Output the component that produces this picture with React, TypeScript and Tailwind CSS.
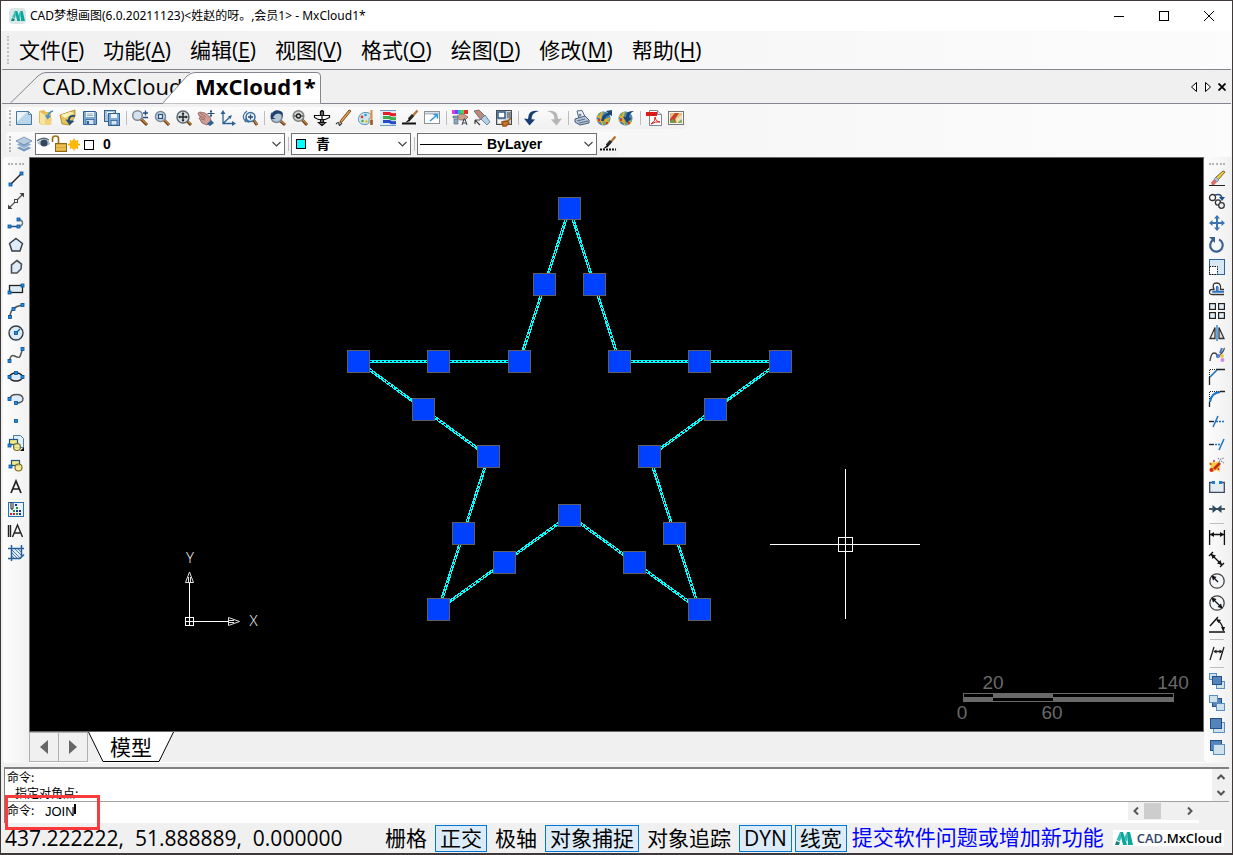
import React from "react";

type Pt = [number, number];

const uiFont = "font-['Open_Sans','Noto_Sans_CJK_SC',sans-serif]";

/* ---------- small drawing helpers ---------- */

const Node = ({ x, y }: { x: number; y: number }) => (
  <rect x={x - 1.5} y={y - 1.5} width="3" height="3" fill="#1e90e8" stroke="#0a4f94" strokeWidth="0.8" />
);

const Icon = ({ children }: { children: React.ReactNode }) => (
  <svg viewBox="0 0 16 16" className="h-4 w-4 shrink-0 overflow-visible" fill="none" aria-hidden="true">
    {children}
  </svg>
);

const Lens = ({ cx = 6.5, cy = 6.5, r = 5, fill = "#d3e2ee", stroke = "#7d8792" }) => (
  <>
    <path d={`M${cx + r * 0.7} ${cy + r * 0.7}L15 15`} stroke="#6b3f1c" strokeWidth="3" />
    <path d={`M${cx + r * 0.8} ${cy + r * 0.7}L15 14.4`} stroke="#d08a3e" strokeWidth="1.2" />
    <circle cx={cx} cy={cy} r={r} fill={fill} stroke={stroke} strokeWidth="1.5" />
  </>
);

const Globe = () => (
  <>
    <circle cx="7.5" cy="8.5" r="7" fill="#4e86b4" />
    <path d="M2 5q3-4 6-3l-2 4-4 2zM8 9l4-1 2 3-4 4-3-2z" fill="#7fae6a" />
    <path d="M1 10q6 3 13-2M6 2q-3 6 1 13M1 6q6 2 12 7" stroke="#f2b21c" strokeWidth="1.4" />
    <circle cx="3" cy="10" r="1.2" fill="#d9381e" />
    <circle cx="11" cy="13" r="1.2" fill="#d9381e" />
  </>
);

const Brush = () => (
  <>
    <path d="M15.5.5L8 9" stroke="#b5763a" strokeWidth="2.4" />
    <path d="M11 5L7 9.5" stroke="#2b2b2b" strokeWidth="3.2" />
    <path d="M8.5 7.5L3 13l5-2z" fill="#111" />
  </>
);

const Sq = ({ x, y, s = 9, dark = false }: { x: number; y: number; s?: number; dark?: boolean }) => (
  <rect
    x={x + 0.5}
    y={y + 0.5}
    width={s}
    height={s - 1}
    fill={dark ? "#5484ba" : "#cfe2ec"}
    stroke={dark ? "#1f4f8c" : "#5a8fc0"}
  />
);

/* ---------- icon set ---------- */

const icons: Record<string, React.ReactNode> = {
  new: (
    <>
      <path d="M.5 1.5h12l3 3v10H.5z" fill="#b9d6ea" stroke="#47799f" />
      <path d="M1 2h10L1 12z" fill="#fff" opacity="0.7" />
      <path d="M12.5 1.5v3h3z" fill="#f4f8fb" stroke="#47799f" strokeWidth="0.8" />
    </>
  ),
  open: (
    <>
      <path d="M1 1l5-1 2 2h5v13H4l-3-2z" fill="#e3bd5c" />
      <path d="M2 2l5 3v11l-5-3z" fill="#f8e4a3" />
      <path d="M7 6l7 2-1 7H7z" fill="#f2d27c" />
      <path d="M15 1q-4 1-5 5" stroke="#3d93cf" strokeWidth="1.8" />
      <path d="M7 5l2.500 4.500L13 6z" fill="#3d93cf" />
    </>
  ),
  recover: (
    <>
      <path d="M0 5l6-2 9-3v6L10 15l-8-1z" fill="#e4c35d" stroke="#a98224" strokeWidth="0.8" />
      <path d="M1 5l9-3 4 1-9 5z" fill="#fff2b7" />
      <path d="M15 6q-7-1-6 6" stroke="#254b78" strokeWidth="2" />
      <path d="M5.500 9.500l4 5.500 5-4z" fill="#254b78" />
    </>
  ),
  save: (
    <>
      <path d="M1.5 1.5h12l1 1v12h-13z" fill="#7fa9cf" stroke="#2f6195" />
      <rect x="4" y="2" width="8" height="5" fill="#edf4fa" />
      <path d="M5 4h6M5 5.500h6" stroke="#7393ae" strokeWidth="0.7" />
      <rect x="4" y="9.500" width="8" height="5" fill="#d6e5f2" stroke="#2f6195" strokeWidth="0.8" />
      <rect x="5" y="11" width="2" height="3" fill="#2f6195" />
    </>
  ),
  saveAll: (
    <>
      <rect x="0.5" y="0.5" width="11" height="11" fill="#a9c5de" stroke="#2f6195" />
      <path d="M3 3h6" stroke="#fff" strokeWidth="2" />
      <rect x="4.5" y="3.5" width="11" height="12" fill="#7fa9cf" stroke="#2f6195" />
      <rect x="7" y="4" width="6" height="4" fill="#edf4fa" />
      <rect x="7" y="10.500" width="6" height="4.500" fill="#d6e5f2" stroke="#2f6195" strokeWidth="0.8" />
    </>
  ),
  zoomRealtime: (
    <>
      <Lens cx={5.5} cy={5.5} r={4.8} />
      <path d="M11 3h5M13.500.5v5M11 7.500h5" stroke="#234c7d" strokeWidth="1.3" />
    </>
  ),
  zoomWindow: (
    <>
      <Lens cx={6.5} cy={6.5} r={5} />
      <rect x="4.500" y="4.500" width="4" height="4" fill="#fff" stroke="#1f4f8c" strokeWidth="1.300" />
    </>
  ),
  zoomExtents: (
    <>
      <Lens cx={7} cy={7} r={6} fill="#dde7ee" stroke="#5e6770" />
      <path d="M7 3v8M3 7h8" stroke="#222" strokeWidth="1.400" />
      <path d="M7 2L5.300 4.300h3.400zM7 12l-1.700-2.300h3.400zM2 7l2.300-1.700v3.400zM12 7L9.700 5.300v3.400z" fill="#222" />
    </>
  ),
  pan: (
    <>
      <path d="M0 3l2-1 5 1 5 4 1 4-4 4-5-2-3-5 2-.5-2-2z" fill="#cf9c97" stroke="#8c5a58" strokeWidth="0.8" />
      <path d="M2 3l6 4M1 5.500l6 3M3 9l4 1" stroke="#8c5a58" strokeWidth="0.7" />
      <path d="M9 14l4-4 3 3-4 3z" fill="#31618f" />
      <path d="M13 0v7M9.500 3.500h7M12 1.500h2M12 5.500h2" stroke="#234c7d" strokeWidth="1.100" />
    </>
  ),
  ucs: (
    <>
      <path d="M3 2v11.500h11M3 13.500L10 7" stroke="#2f6195" strokeWidth="1.300" />
      <path d="M3 0L.5 4h5zM16 13.500l-4-2.500v5zM12 5L8 6.500l2.500 2.500z" fill="#2f6195" />
    </>
  ),
  zoomScale: (
    <>
      <Lens cx={8.500} cy={7} r={4.500} fill="#e8eff5" stroke="#3b6c9c" />
      <path d="M8.500 4.500v5M6 7h5" stroke="#234c7d" strokeWidth="1.300" />
      <path d="M5 1Q-2 6 4 12M3 11l3 1-2-3z" stroke="#3b6c9c" strokeWidth="1.200" />
    </>
  ),
  zoomPrevious: (
    <>
      <Lens cx={6.500} cy={7} r={5.500} fill="#b8c8d6" />
      <path d="M3 7.500q3-6 9-3v4q3-7-3-8Q4-1 2 4L1 2v7h5z" fill="#1e4270" />
    </>
  ),
  magnify: (
    <>
      <Lens cx={6.500} cy={6} r={5.300} fill="#d2d6d7" stroke="#7e7e7e" />
      <circle cx="6.500" cy="6" r="2" stroke="#222" strokeWidth="1.300" />
      <path d="M2 6h3M8 6h3" stroke="#222" />
    </>
  ),
  plane: (
    <>
      <path d="M6.500 15V1.500Q8 0 9.500 1.500V15" fill="#fff" stroke="#111" strokeWidth="1.200" />
      <path d="M.5 5.500h15v2l-4 2h-7l-4-2z" fill="#fff" stroke="#111" strokeWidth="1.200" />
      <path d="M4.500 12.500h7L8 15.500z" fill="#fff" stroke="#111" strokeWidth="1.200" />
      <path d="M8 0v16" stroke="#111" strokeWidth="1.200" />
    </>
  ),
  pencil: (
    <>
      <path d="M15 1L6 12l-2 1 .5-2.500L13 0z" fill="#e4a34a" stroke="#6c3b14" strokeWidth="0.900" />
      <path d="M0 14q3-3 3 0t3-1" stroke="#222" strokeWidth="1.200" />
    </>
  ),
  palette: (
    <>
      <path d="M7 2.500c5 0 7 2 6 4s-2 1-2 3 1 5-4 5-7-3-6.500-6S3 2.500 7 2.500z" fill="#cfe6f0" stroke="#4d91b8" />
      <circle cx="4" cy="7" r="1.400" fill="#d63c2b" />
      <circle cx="7.500" cy="5" r="1.300" fill="#2a9fd6" />
      <circle cx="4.500" cy="11" r="1.300" fill="#5cab3f" />
      <circle cx="8.500" cy="11.500" r="1.300" fill="#e7bb2d" />
      <path d="M13.500 0v14" stroke="#e58c35" strokeWidth="2" />
      <path d="M13.500 10v5" stroke="#9a5a20" strokeWidth="2.500" />
    </>
  ),
  layerStates: (
    <>
      <path d="M0 .5h16v15H0z" fill="#dcebf5" />
      <path d="M0 .5h16M0 15.500h16" stroke="#6f9cc0" />
      <path d="M3 2h7q2 2 6 1v3q-5 1-7-1H3z" fill="#e3202a" />
      <path d="M3 6h7q2 2 6 1v3q-5 1-7-1H3z" fill="#3eae49" />
      <path d="M3 10h7q2 2 6 1v3q-5 1-7-1H3z" fill="#2749c9" />
    </>
  ),
  brush: (
    <>
      <Brush />
      <path d="M0 13.500h14" stroke="#111" strokeWidth="2" />
    </>
  ),
  brushDots: (
    <>
      <Brush />
      <path d="M0 13.500h16" stroke="#111" strokeWidth="2" strokeDasharray="2 1" />
    </>
  ),
  external: (
    <>
      <rect x="0.500" y="1.500" width="15" height="12" fill="#fff" stroke="#8b9299" />
      <path d="M1 3.500h14" stroke="#b7c1ca" strokeWidth="2" />
      <path d="M6 11l7-6M13.500 4.500H9.500M13.500 4.500v4" stroke="#2896d8" strokeWidth="1.500" />
    </>
  ),
  matchColor: (
    <>
      <path d="M0 0h3v4H0z" fill="#e33ad4" />
      <path d="M3 0h3v4H3z" fill="#6744ee" />
      <path d="M6 0h3v4H6z" fill="#17bddb" />
      <path d="M9 0h3v4H9z" fill="#5fd138" />
      <path d="M12 0h4v4h-4z" fill="#ed2929" />
      <path d="M4 7q5-5 9-2l3 2-3 3-5 0z" fill="#c89f8b" stroke="#7c5848" strokeWidth="0.700" />
      <path d="M1 6h5v2H1zM2 9h4v5H2z" fill="#8ba9bf" stroke="#4e6475" strokeWidth="0.600" />
      <path d="M10 15l2-6h1l2 6M10.500 13h4" stroke="#34465a" />
    </>
  ),
  eraseHand: (
    <>
      <path d="M0 1l5-1 6 6-4 4z" fill="#b68c80" stroke="#75554b" strokeWidth="0.800" />
      <path d="M7 9l4-4 5 7-3 3z" fill="#b7d0e3" stroke="#46729b" strokeWidth="0.800" />
      <path d="M1 10h5M1 10v4M1 10l5 5" stroke="#444" strokeWidth="1.200" />
    </>
  ),
  props: (
    <>
      <rect x="0.500" y="0.500" width="15" height="14" fill="#c8ced4" stroke="#454c54" />
      <rect x="2" y="2" width="7" height="6" fill="#fff" stroke="#24518a" strokeWidth="1.400" />
      <path d="M11 3h4M11 5h4M11 7h4" stroke="#444" />
      <path d="M2 10h5v3H2z" fill="#f5f5f5" />
      <path d="M15 8l-4 4M6 12l5-1 2 2-3 3H7z" stroke="#995516" strokeWidth="1.500" fill="#cb792a" />
    </>
  ),
  undo: <path d="M15 1Q4-1 4 9L0 8.500 5.500 15.500 11 9.500l-3.500-.2Q7 3 15 1z" fill="#173d70" />,
  redo: <path d="M1 1q11-2 11 8l4-.5-5.500 7L5 9.500l3.500-.2Q9 3 1 1z" fill="#b5b5b5" />,
  print: (
    <>
      <path d="M3 1l5-.5 3 6-6 2z" fill="#eef3f8" stroke="#51647e" />
      <path d="M1 9l10-3 4 4v3l-9 2-5-3z" fill="#b9c8d8" stroke="#455a78" />
      <path d="M3 11l8-2M5 13l9-2" stroke="#455a78" strokeWidth="0.900" />
      <circle cx="6" cy="5" r="1.500" fill="#6a86a5" />
    </>
  ),
  publish: (
    <>
      <Globe />
      <path d="M5 11Q6 4 12 3l-2-2 6-1v6l-2-1q-5 1-6 6z" fill="#1d4778" />
    </>
  ),
  download: (
    <>
      <Globe />
      <path d="M16 1Q8 0 8 7L5 7l4 6 5-5-3-.5q0-4 5-6.500z" fill="#1d4778" />
    </>
  ),
  pdf: (
    <>
      <path d="M3.500.5h8l4 4v11h-12z" fill="#fff" stroke="#7c8791" />
      <path d="M11.500.5v4h4" fill="#e4e9ed" stroke="#7c8791" />
      <path d="M0 2h11v4H0z" fill="#dd1c1a" />
      <path d="M5 14q5-3 4-7 1 5 5 5-4-1-9 2z" stroke="#dd1c1a" />
    </>
  ),
  image: (
    <>
      <rect x="0.500" y="1.500" width="15" height="13" fill="#f7f7f7" stroke="#777" />
      <rect x="2" y="3" width="12" height="10" fill="#e4bd7a" />
      <path d="M2 9l5-6h4l-4 6 1 4H2z" fill="#c8402c" />
      <path d="M2 11l3-2 3 4H2z" fill="#6f9f40" />
      <path d="M8 9l6-4v8H9z" fill="#eee0c2" />
      <path d="M10 12l4-3v4h-4z" fill="#8fae5a" />
    </>
  ),
  layers: (
    <>
      <path d="M0 12l8-4 8 4-8 4z" fill="#7c9bbd" stroke="#fff" strokeWidth="0.600" />
      <path d="M0 8.500l8-4 8 4-8 4z" fill="#91add0" stroke="#fff" strokeWidth="0.600" />
      <path d="M0 5l8-4 8 4-8 4z" fill="#b7cde0" stroke="#456d98" strokeWidth="0.600" />
    </>
  ),
  line: (
    <>
      <path d="M2.500 13.500L13.500 2.500" stroke="#222" strokeWidth="1.400" />
      <Node x={2.5} y={13.5} />
      <Node x={13.5} y={2.5} />
    </>
  ),
  xline: (
    <>
      <path d="M1 15L15 1" stroke="#555" strokeWidth="1.200" />
      <path d="M0 16v-4.500l4.500 4.500zM16 0v4.500L11.500 0z" fill="#444" />
      <rect x="6.500" y="6.500" width="3" height="3" fill="#fff" stroke="#444" />
    </>
  ),
  pline: (
    <>
      <path d="M10.500 11.500q4-.5 4-3.500t-4-3.500" stroke="#777" strokeWidth="1.500" />
      <path d="M1.500 11.500h9" stroke="#174e8a" strokeWidth="1.500" />
      <Node x={1.5} y={11.5} />
      <Node x={10.5} y={11.5} />
      <Node x={10.5} y={4.5} />
    </>
  ),
  polygon: <path d="M8 1.500l6.500 5-2.500 7.500H4L1.500 6.500z" fill="#dcebf7" stroke="#333d47" strokeWidth="1.400" />,
  polygonFree: <path d="M9 1.500l4.500 3.500-.5 5-4 4H3.500V6z" fill="#dcebf7" stroke="#4c5055" strokeWidth="1.600" />,
  rect: (
    <>
      <rect x="1.500" y="4.500" width="13" height="7" fill="#dcebf7" stroke="#222" strokeWidth="1.300" />
      <Node x={1.5} y={11.5} />
      <Node x={14.5} y={4.5} />
    </>
  ),
  arc: (
    <>
      <path d="M2 14Q2 4 14.500 2" stroke="#555" strokeWidth="1.500" />
      <Node x={2} y={14} />
      <Node x={5.5} y={6} />
      <Node x={14.5} y={2} />
    </>
  ),
  circle: (
    <>
      <circle cx="8" cy="8" r="7" fill="#dcebf7" stroke="#333d47" strokeWidth="1.400" />
      <path d="M8 8l4-4" stroke="#0a60a8" strokeWidth="1.300" />
      <Node x={8} y={8} />
    </>
  ),
  spline: (
    <>
      <path d="M1.500 14q1-7 5-5t5 1 3-8" stroke="#555" strokeWidth="1.500" />
      <Node x={1.5} y={14} />
      <Node x={14.5} y={2} />
    </>
  ),
  ellipse: (
    <>
      <ellipse cx="8" cy="8" rx="6.500" ry="4" fill="#dcebf7" stroke="#222" strokeWidth="1.300" />
      <Node x={1.5} y={8} />
      <Node x={14.5} y={8} />
      <Node x={8} y={4} />
    </>
  ),
  ellipseArc: (
    <>
      <path d="M2 8q0-4.500 6.500-4.500T15 8q0 4-7 4" fill="#dcebf7" stroke="#555" strokeWidth="1.400" />
      <Node x={1.5} y={8} />
      <Node x={8} y={12} />
    </>
  ),
  point: <Node x={8} y={8} />,
  block: (
    <>
      <path d="M5.500.5h7l3 3v9h-10z" fill="#e4f0f8" stroke="#477ba8" />
      <rect x="1.500" y="4.500" width="8" height="5" fill="#f2ea82" stroke="#24558a" strokeWidth="1.200" />
      <circle cx="9" cy="12" r="3.500" fill="#f2ea82" fillOpacity="0.800" stroke="#776f2b" strokeWidth="1.200" />
      <Node x={1.5} y={10.5} />
      <path d="M16 12v4h-4z" fill="#111" />
    </>
  ),
  insert: (
    <>
      <rect x="3.500" y="3.500" width="8" height="5" fill="#f2ea82" stroke="#24558a" strokeWidth="1.200" />
      <circle cx="10.500" cy="10.500" r="3.500" fill="#f2ea82" fillOpacity="0.800" stroke="#776f2b" strokeWidth="1.200" />
      <Node x={2.5} y={9.5} />
    </>
  ),
  text: <path d="M3 14L8 2l5 12M5 10h6" stroke="#222" strokeWidth="1.700" />,
  table: (
    <>
      <rect x="0.500" y="1.500" width="15" height="14" fill="#e7f2fa" stroke="#2a6eb4" />
      <path d="M3 1v7q2 1 2-1V2" stroke="#222" />
      <path d="M2 12h2v2H2zM5 12h2v2H5z" fill="#d22020" />
      <path d="M5 9h2v2H5zM8 12h2v2H8zM8 6h2v2H8z" fill="#2b8a36" />
      <path d="M7 3h2v2H7zM8 9h2v2H8zM11 12h2v2h-2zM11 9h2v2h-2z" fill="#222d9c" />
    </>
  ),
  mtext: <path d="M.5 2v12M2.500 2v12M4.500 14L9.500 2l5 12M6.500 10h6" stroke="#222" strokeWidth="1.400" />,
  hatch: (
    <>
      <path d="M4 4h9v9H4z" fill="#dcebf7" />
      <path d="M4 11l2 2M4 8l5 5M4 5l8 8M7 4l6 6M10 4l3 3" stroke="#355f8c" strokeWidth="0.800" />
      <path d="M0 3.500h16M0 13.500h12l4-4M3.500 0v16M13.500 0v12" stroke="#24609a" strokeWidth="1.500" />
    </>
  ),
  erase: (
    <>
      <path d="M16 1l-7 8-3-2 8-7z" fill="#efcf4a" stroke="#695515" strokeWidth="0.900" />
      <path d="M7 6l3 3-2 2-3-3z" fill="#a9c8de" stroke="#55768f" strokeWidth="0.600" />
      <path d="M5 8l3 3-3 3H3l-1-2z" fill="#dc6a68" />
      <path d="M0 14.500h16" stroke="#222" />
    </>
  ),
  copy: (
    <>
      <circle cx="3.500" cy="4.500" r="3" fill="#fff" stroke="#333" strokeWidth="1.300" />
      <circle cx="9" cy="9.500" r="2.600" fill="#fff" stroke="#333" strokeWidth="1.300" />
      <circle cx="12.500" cy="12.500" r="2.800" fill="#eef5fa" stroke="#333" strokeWidth="1.300" />
      <path d="M6 2q6-2 7 3" stroke="#235083" strokeWidth="1.600" />
      <path d="M10 4h6l-3 4z" fill="#235083" />
    </>
  ),
  move: <path d="M8 0l3 3.500H9V7h3.500V5L16 8l-3.500 3V9H9v3.500h2L8 16l-3-3.500h2V9H3.500v2L0 8l3.500-3v2H7V3.500H5z" fill="#3c74b0" />,
  rotate: (
    <>
      <path d="M10 2.500A6.300 6.300 0 1 1 4 3" stroke="#3a6191" strokeWidth="2.200" />
      <path d="M0 0h6v6z" fill="#3a6191" />
    </>
  ),
  scale: (
    <>
      <rect x="0.500" y="0.500" width="15" height="15" fill="#d6e8f5" stroke="#2d6599" />
      <path d="M.5 7.500h8v8h-8z" fill="#fff" />
      <path d="M.5 7.500h8v8h-8z" stroke="#111" strokeDasharray="1.500 1" />
    </>
  ),
  offset: (
    <>
      <path d="M15 13.500H3q-2.500 0-2.500-2.500T3 8.500h2Q2.500 2 7.500 2t4 6.500H15" fill="#fff" stroke="#333" strokeWidth="1.300" />
      <path d="M15 11H4q-1 0 0-.500h3.500v-4q.5-2 1.500 0v4h6" stroke="#2d72c0" strokeWidth="1.300" />
    </>
  ),
  array: (
    <g fill="#e3eff8" stroke="#222" strokeWidth="1.200">
      <rect x="0.600" y="0.600" width="5.800" height="5.800" />
      <rect x="9.600" y="0.600" width="5.800" height="5.800" />
      <rect x="0.600" y="9.600" width="5.800" height="5.800" />
      <rect x="9.600" y="9.600" width="5.800" height="5.800" />
    </g>
  ),
  mirror: (
    <>
      <path d="M6 2.500v11H1z" fill="#e7eff5" stroke="#333" strokeWidth="1.300" />
      <path d="M10 2.500v11h5z" fill="#dde2e6" stroke="#333" strokeWidth="1.300" />
      <path d="M8 0v16" stroke="#1b78ca" strokeWidth="1.300" />
    </>
  ),
  splineEdit: (
    <>
      <path d="M1 14q1-8 4-8t3 3 4-2 3-6" stroke="#444" strokeWidth="1.400" />
      <path d="M13 1l-2 5" stroke="#3f75c4" strokeWidth="2" />
      <circle cx="9" cy="9" r="2" fill="#4f83d8" />
      <circle cx="13" cy="9" r="2" fill="#efc84a" />
      <circle cx="13.500" cy="13" r="2" fill="#d38be8" />
    </>
  ),
  chamfer: (
    <>
      <path d="M.5 16V8M7 .5h9" stroke="#222" strokeWidth="1.300" />
      <path d="M.5 8V.5H7" stroke="#222" strokeDasharray="1 1" />
      <path d="M1 8l7-7" stroke="#1b70c4" strokeWidth="1.600" />
    </>
  ),
  fillet: (
    <>
      <path d="M.5 16v-5M11 .5h5" stroke="#222" strokeWidth="1.300" />
      <path d="M.5 8V.5H10" stroke="#222" strokeDasharray="1 1" />
      <path d="M1 11Q2 2 11 1" stroke="#1b70c4" strokeWidth="2" />
    </>
  ),
  trim: (
    <>
      <path d="M0 8.500h5" stroke="#222" strokeWidth="1.400" />
      <path d="M7 8.500h9" stroke="#1b70c4" strokeWidth="1.400" strokeDasharray="2 1" />
      <path d="M4 14L9 3" stroke="#1b70c4" strokeWidth="1.500" />
    </>
  ),
  extend: (
    <>
      <path d="M0 9.500h5" stroke="#222" strokeWidth="1.400" />
      <path d="M6 9.500h5" stroke="#1b70c4" strokeWidth="1.400" strokeDasharray="2 1" />
      <path d="M10 15l5-11" stroke="#1b70c4" strokeWidth="1.500" />
    </>
  ),
  explode: (
    <>
      <path d="M0 5l3 1 2-2 1 2 4-2-1 4 3 1-2 2 1 4-4-2-3 2-1-3-3 1 2-4z" fill="#f9c93c" />
      <path d="M4 11l6-6 2 2-6 6z" fill="#c52a1b" />
      <circle cx="2.500" cy="13" r="2" fill="#dd2717" />
      <circle cx="1.500" cy="7" r="1" fill="#d22" />
      <circle cx="9.500" cy="12" r="1" fill="#d22" />
      <circle cx="5" cy="4" r="1" fill="#d22" />
      <path d="M10 5l2-3 3-1M12 4l3 2M9 1l2 2" stroke="#829baa" strokeWidth="1.300" strokeDasharray="1.500 1" />
    </>
  ),
  break: (
    <>
      <path d="M4 3.500H.7v9.800h14.600V3.500H12" fill="#e4edf4" stroke="#3d4a61" strokeWidth="1.300" />
      <path d="M3 2h3v3H3zM10 2h3v3h-3z" fill="#1681dc" />
    </>
  ),
  join: (
    <>
      <path d="M0 8h16" stroke="#222" strokeWidth="1.500" />
      <path d="M3.500 4l5 4-5 4zM12.500 4l-5 4 5 4z" fill="#2a4b66" />
    </>
  ),
  dimLinear: (
    <>
      <path d="M.6 1v15M15.400 1v15M1 5.500h14" stroke="#111" strokeWidth="1.300" />
      <path d="M1 5.500l4-2.500v5zM15 5.500L11 3v5z" fill="#111" />
    </>
  ),
  dimAligned: (
    <>
      <path d="M0 5l4-4M11 16l4-4M2.500 3.500l10 10" stroke="#111" strokeWidth="1.400" />
      <path d="M2 3l5 1.500L3.500 8zM13 14l-1.500-5L8 12.500z" fill="#111" />
    </>
  ),
  dimRadius: (
    <>
      <circle cx="8" cy="8" r="7.200" fill="#f3f6f8" stroke="#444" strokeWidth="1.300" />
      <path d="M3 3l6 6" stroke="#111" strokeWidth="1.300" />
      <path d="M2.500 2.500l5 1.500L4 7.500z" fill="#111" />
    </>
  ),
  dimDiameter: (
    <>
      <circle cx="8" cy="8" r="7.200" fill="#f3f6f8" stroke="#444" strokeWidth="1.300" />
      <path d="M3 3l10 10" stroke="#111" strokeWidth="1.300" />
      <path d="M2.500 2.500l5 1.500L4 7.500zM13.500 13.500l-5-1.500L12 8.500z" fill="#111" />
    </>
  ),
  dimAngle: (
    <>
      <path d="M0 15h16M1 9l8-9M8 3q6 4 6.500 11" stroke="#111" strokeWidth="1.400" />
      <path d="M7 2l5 1-2.500 3zM14.500 14.500L12 10h4z" fill="#111" />
    </>
  ),
  dimEdit: (
    <>
      <path d="M1 15L5 2M11 15l4-13M5 6.500h8" stroke="#222" strokeWidth="1.300" />
      <path d="M4.500 6.500l3-2v4zM13.500 6.500l-3-2v4z" fill="#222" />
    </>
  ),
  order1: (
    <>
      <Sq x={0} y={0} s={7} />
      <Sq x={7} y={8} s={8} />
      <Sq x={3} y={3} s={9} dark />
    </>
  ),
  order2: (
    <>
      <Sq x={3} y={3} s={9} dark />
      <Sq x={0} y={0} s={8} />
      <Sq x={7} y={8} s={8} />
    </>
  ),
  order3: (
    <>
      <Sq x={4} y={5} s={11} />
      <Sq x={1} y={1} s={11} dark />
    </>
  ),
  order4: (
    <>
      <Sq x={1} y={1} s={11} dark />
      <Sq x={4} y={5} s={11} />
    </>
  ),
};

/* ---------- toolbars ---------- */

const mainTools = [
  "new", "open", "recover", "save", "saveAll", "|",
  "zoomRealtime", "zoomWindow", "zoomExtents", "pan", "ucs", "zoomScale", "|",
  "zoomPrevious", "magnify", "plane", "pencil", "palette", "layerStates", "brush", "external", "|",
  "matchColor", "eraseHand", "props", "|", "undo", "redo", "|", "print", "publish", "download", "|", "pdf", "image",
];
const drawTools = [
  "line", "xline", "pline", "polygon", "polygonFree", "rect", "arc", "circle", "spline",
  "ellipse", "ellipseArc", "point", "block", "insert", "text", "table", "mtext", "hatch",
];
const modifyTools = [
  "erase", "copy", "move", "rotate", "scale", "offset", "array", "mirror", "splineEdit", "chamfer", "fillet",
  "trim", "extend", "explode", "break", "join", "|",
  "dimLinear", "dimAligned", "dimRadius", "dimDiameter", "dimAngle", "|", "dimEdit", "|",
  "order1", "order2", "order3", "order4",
];

const ToolButton = ({ name }: { name: string }) => (
  <button type="button" aria-label={name} className="flex h-[22px] w-[22px] shrink-0 items-center justify-center">
    <Icon>{icons[name]}</Icon>
  </button>
);

const GripV = () => <span className="h-4 w-0 shrink-0 border-l-2 border-dotted border-[#b4b4b4]" />;

const SideBar = ({ label, tools }: { label: string; tools: string[] }) => (
  <div role="toolbar" aria-label={label} className="flex w-[26px] shrink-0 flex-col items-center rounded-sm bg-linear-to-r from-[#fdfdfd] to-[#f1f1f1] pt-1.5">
    <span className="mb-[3px] h-0 w-4 shrink-0 border-t-2 border-dotted border-[#b4b4b4]" />
    {tools.map((t, i) =>
      t === "|" ? (
        <span key={i} className="flex h-1.5 shrink-0 items-center"><span className="h-px w-3.5 bg-[#bdbdbd]" /></span>
      ) : (
        <ToolButton key={i} name={t} />
      ),
    )}
  </div>
);

const Divider = () => (
  <span className="flex w-1.5 shrink-0 justify-center"><span className="h-3.5 w-px bg-[#bdbdbd]" /></span>
);

const Combo = ({ label, value, box, pad, children }: { label: string; value: string; box: string; pad: string; children: React.ReactNode }) => (
  <div className={`relative h-[22px] shrink-0 ${box}`}>
    <select
      aria-label={label}
      className={`block h-full w-full appearance-none border border-[#707070] bg-white pr-5 font-['Liberation_Sans','Noto_Sans_CJK_SC',sans-serif] text-sm leading-5 font-bold text-black ${pad}`}
    >
      <option>{value}</option>
    </select>
    <span className="pointer-events-none absolute inset-y-0 left-0 flex items-center">{children}</span>
    <svg className="pointer-events-none absolute top-2 right-1 h-[6px] w-[9px]" viewBox="0 0 9 6" fill="none">
      <path d="M.5 1l4 4 4-4" stroke="#444" strokeWidth="1.2" />
    </svg>
  </div>
);

const Logo = ({ className }: { className: string }) => (
  <svg viewBox="0 0 18 15" className={className} aria-hidden="true">
    <path d="M5 1h3l4 13H8zM12 1h3l3 13h-5z" fill="#0aa59b" />
    <path d="M5 1L1.500 9 5 10.500 6.500 6zM12 1L9.500 6l1.500 6 2-6z" fill="#37bdb3" />
    <path d="M0 14l1.300-4 3.700 1.500L4 14z" fill="#14877f" />
  </svg>
);

/* ---------- drawing area ---------- */

const star: Pt[] = [
  [569, 208], [619, 361], [780, 361], [649, 456], [699, 609],
  [569, 515], [438, 609], [488, 456], [358, 361], [519, 361],
];
const mids: Pt[] = [
  [594, 284], [699, 361], [715, 409], [674, 533], [634, 562],
  [504, 562], [463, 533], [423, 409], [438, 361], [544, 284],
];
const starPoints = star.map(([x, y]) => `${x + 0.5},${y + 0.5}`).join(" ");

const Drawing = () => (
  <svg className="absolute inset-0 h-full w-full" fill="none" role="img" aria-label="MxCloud1">
    <g transform="translate(-30 -158)" shapeRendering="crispEdges">
      <polygon points={starPoints} stroke="#00ffff" strokeWidth="3" />
      <polygon points={starPoints} stroke="#000" strokeWidth="1" strokeDasharray="2 2" />
      {[...star, ...mids].map(([x, y]) => (
        <rect key={`${x}-${y}`} x={x - 10.5} y={y - 10.5} width="22" height="22" fill="#0040ff" stroke="#606060" />
      ))}
      <g stroke="#fff">
        <path d="M770 544.500h150M845.500 469v150M838.500 537.500h14v14h-14z" />
        <path d="M189.500 582v44M185 621.500h43M185.500 617.500h8v8h-8z" />
      </g>
      <g stroke="#e0e0e0" shapeRendering="auto">
        <path d="M189.500 572l-4 10.500h8zM188.500 577v5M190.500 577v5M239.500 621.500l-11-4v8zM229 620.500h5M229 622.500h5" />
      </g>
      <path d="M963 693h211v9H963z" fill="#696969" />
      <path d="M964 694h29v3h-29zM993 698h60v3h-60zM1053 694h120v3h-120z" fill="#000" />
    </g>
    <g transform="translate(-30 -158)" textAnchor="middle">
      <g fill="#fff" fontSize="15" className="font-['Open_Sans',sans-serif] font-light">
        <text x="190" y="563">Y</text>
        <text x="253.5" y="626">X</text>
      </g>
      <g fill="#696969" fontSize="19" className="font-['Liberation_Sans',sans-serif]">
        <text x="993" y="689">20</text>
        <text x="1173" y="689">140</text>
        <text x="962" y="719">0</text>
        <text x="1052" y="719">60</text>
      </g>
    </g>
  </svg>
);

/* ---------- application ---------- */

const menus: [string, string][] = [
  ["文件", "F"], ["功能", "A"], ["编辑", "E"], ["视图", "V"], ["格式", "O"], ["绘图", "D"], ["修改", "M"], ["帮助", "H"],
];
const modes: [string, boolean][] = [
  ["栅格", false], ["正交", true], ["极轴", false], ["对象捕捉", true], ["对象追踪", false], ["DYN", true], ["线宽", true],
];

export default function App() {
  return (
    <div className={`flex min-h-screen flex-col border-x border-t border-b-2 border-[#40393a] bg-[#f0f0f0] text-black ${uiFont}`}>
      <header className="flex h-[30px] shrink-0 items-center bg-white pl-2">
        <span className="mr-1 flex h-4 w-[17px] items-center justify-center rounded-sm bg-[#d9e8e7]">
          <Logo className="h-3 w-3.5" />
        </span>
        <h1 className="flex-1 font-['Noto_Sans','Noto_Sans_CJK_SC',sans-serif] text-xs whitespace-nowrap">CAD梦想画图(6.0.20211123)&lt;姓赵的呀。,会员1&gt; - MxCloud1*</h1>
        <div className="flex">
          <button type="button" aria-label="最小化" className="flex h-[30px] w-[45px] items-center justify-center">
            <span className="h-px w-2.5 bg-black" />
          </button>
          <button type="button" aria-label="最大化" className="flex h-[30px] w-[45px] items-center justify-center">
            <span className="h-2.5 w-2.5 border border-black" />
          </button>
          <button type="button" aria-label="关闭" className="flex h-[30px] w-[46px] items-center justify-center">
            <svg viewBox="0 0 10 10" className="h-2.5 w-2.5"><path d="M0 0l10 10M10 0L0 10" stroke="#000" /></svg>
          </button>
        </div>
      </header>

      <nav className="flex h-[38px] shrink-0 items-center bg-linear-to-r from-[#f0f0f0] to-[#fcfcfc] pl-1.5">
        <span className="h-7 border-l-2 border-dotted border-[#c0c0c0]" />
        <ul className="ml-2.5 flex gap-[19px] text-[21px] leading-8 whitespace-nowrap">
          {menus.map(([name, key]) => (
            <li key={key}>
              <button type="button">{name}(<u className="underline-offset-2">{key}</u>)</button>
            </li>
          ))}
        </ul>
      </nav>

      <div className="mx-px flex h-[35px] shrink-0 items-end border-y border-[#85858f] pl-2">
        <div role="tablist" className="flex h-[31px]">
          <button type="button" role="tab" aria-selected="false" className="relative flex w-[180px] items-start text-left text-[22px] leading-[29px]">
            <svg className="absolute top-0 left-0" width="180" height="31" fill="none"><path d="M.5 31L28 4q4-3.500 8-3.500h144" stroke="#85858f" /></svg>
            <span className="relative ml-8 overflow-hidden whitespace-nowrap">CAD.MxCloud</span>
          </button>
          <button type="button" role="tab" aria-selected="true" className="relative -ml-7 flex w-[159px] items-start text-left text-[22px] leading-[29px] font-bold">
            <svg className="absolute top-0 left-0" width="159" height="32" fill="none"><path d="M.5 31.500L25 4q4-3.500 8-3.500h122q3.500 0 3.500 3.500v27.500" fill="#fff" stroke="#85858f" /></svg>
            <span className="relative ml-[33px] whitespace-nowrap">MxCloud1*</span>
          </button>
        </div>
        <div className="ml-auto flex gap-1 self-center pr-1">
          <button type="button" aria-label="向左滚动" className="flex h-4 w-2.5 items-center justify-center">
            <svg width="6" height="10"><path d="M5.500.5v9L.5 5z" fill="#fff" stroke="#000" /></svg>
          </button>
          <button type="button" aria-label="向右滚动" className="flex h-4 w-2.5 items-center justify-center">
            <svg width="6" height="10"><path d="M.5.5v9l5-4.500z" fill="#fff" stroke="#000" /></svg>
          </button>
          <button type="button" aria-label="关闭标签" className="flex h-4 w-2.5 items-center justify-center">
            <svg width="8" height="8"><path d="M.5.5l7 7M7.500.5l-7 7" stroke="#000" strokeWidth="1.800" /></svg>
          </button>
        </div>
      </div>

      <div className="mx-px flex shrink-0 flex-col items-start bg-linear-to-r from-[#f0f0f0] to-[#fcfcfc] pb-px pl-1">
        <div role="toolbar" aria-label="标准" className="mt-[3px] flex h-[22px] items-center rounded bg-linear-to-b from-[#fbfbfb] to-[#f0f0f0] pl-[3px]">
          <GripV />
          <span className="w-0.5" />
          {mainTools.map((t, i) => (t === "|" ? <Divider key={i} /> : <ToolButton key={i} name={t} />))}
        </div>
        <div role="toolbar" aria-label="特性" className="mt-[3px] flex h-6 items-center rounded bg-linear-to-b from-[#fbfbfb] to-[#f0f0f0] pl-[3px]">
          <GripV />
          <span className="w-0.5" />
          <ToolButton name="layers" />
          <Combo label="图层" value="0" box="w-[250px]" pad="pl-[67px]">
            <svg width="62" height="18" fill="none" className="ml-0.5">
              <path d="M0 8q6-6 12-2l1 3q-5 5-13-1z" fill="#aeb9c4" />
              <circle cx="7" cy="8" r="3.500" fill="#34475e" />
              <path d="M0 6q6-5 12-1" stroke="#5c6b7b" strokeWidth="1.500" />
              <path d="M15.500 7V3.500q0-2.500 3-2.500t3 2.500V9" stroke="#9b7419" strokeWidth="1.700" />
              <rect x="18.500" y="8.500" width="11" height="8" fill="#dca936" stroke="#8f6815" />
              <path d="M19 11h10M19 14h10" stroke="#f5d374" />
              <path d="M37 3.500v12M31 9.500h12M33 5.500l8 8M41 5.500l-8 8" stroke="#f0a008" strokeWidth="1.300" />
              <circle cx="37" cy="9.500" r="4.500" fill="#ffb907" />
              <rect x="47.500" y="5.500" width="9" height="9" fill="#fff" stroke="#000" />
            </svg>
          </Combo>
          <Divider />
          <Combo label="颜色" value="青" box="w-[120px]" pad="pl-6">
            <span className="ml-[5px] h-2.5 w-2.5 border border-black bg-[#00ffff]" />
          </Combo>
          <Divider />
          <Combo label="线型" value="ByLayer" box="w-[180px]" pad="pl-[69px]">
            <span className="ml-[3px] h-px w-[62px] bg-black" />
          </Combo>
          <ToolButton name="brushDots" />
        </div>
      </div>

      <main className="mx-0.5 flex flex-1">
        <SideBar label="绘图" tools={drawTools} />
        <div className="flex min-w-0 flex-1 flex-col">
          <div className="relative flex-1 border border-[#696969] bg-black"><Drawing /></div>
          <div className="flex h-[31px] shrink-0 border-b border-white">
            <button type="button" aria-label="上一布局" className="flex w-[30px] items-center justify-center border border-[#b0b0b0]">
              <svg width="8" height="14"><path d="M8 0v14L0 7z" fill="#666" /></svg>
            </button>
            <button type="button" aria-label="下一布局" className="-ml-px flex w-[30px] items-center justify-center border border-[#b0b0b0]">
              <svg width="8" height="14"><path d="M0 0v14l8-7z" fill="#666" /></svg>
            </button>
            <button type="button" className="relative w-[86px] text-[21px] leading-7">
              <svg className="absolute inset-0" width="86" height="30"><path d="M.5 0L15 29.500h56L85.500 0" fill="#fff" stroke="#000" /></svg>
              <span className="relative">模型</span>
            </button>
          </div>
        </div>
        <SideBar label="修改" tools={modifyTools} />
      </main>

      <section aria-label="命令行" className="relative mx-[3px] mt-1 shrink-0 border-t-2 border-l border-[#808080] bg-white text-xs leading-4">
        <div className="flex h-[33px] border-b border-[#a0a0a0]">
          <div className="flex-1 pl-0.5 font-['Noto_Sans_CJK_SC',sans-serif] leading-4">
            <p>命令:</p>
            <p className="pl-2">指定对角点:</p>
          </div>
          <div className="flex w-[17px] flex-col items-center justify-around bg-[#f0f0f0]">
            <button type="button" aria-label="向上" className="flex h-4 w-4 items-center justify-center"><svg width="8" height="6" fill="none"><path d="M.5 5L4 1.500 7.500 5" stroke="#555" strokeWidth="2" /></svg></button>
            <button type="button" aria-label="向下" className="flex h-4 w-4 items-center justify-center"><svg width="8" height="6" fill="none"><path d="M.5 1L4 4.500 7.500 1" stroke="#555" strokeWidth="2" /></svg></button>
          </div>
        </div>
        <div className="flex h-[21px]">
          <label htmlFor="cmd" className="w-10 pl-0.5 font-['Noto_Sans_CJK_SC',sans-serif] leading-4">命令:</label>
          <input id="cmd" defaultValue="JOIN" className="field-sizing-content h-[19px] font-['Liberation_Sans',sans-serif] text-[13px] outline-none" />
          <span className="mt-0.5 -ml-px h-2.5 w-0.5 bg-black" />
          <div className="ml-auto flex h-[18px] w-[71px] items-center bg-[#f0f0f0]">
            <button type="button" aria-label="向左" className="flex w-4 justify-center"><svg width="6" height="8" fill="none"><path d="M5 .5L1.500 4 5 7.500" stroke="#555" strokeWidth="2" /></svg></button>
            <span className="h-4 w-[17px] bg-[#cdcdcd]" />
            <button type="button" aria-label="向右" className="ml-auto flex w-[18px] justify-center"><svg width="6" height="8" fill="none"><path d="M1 .5L4.500 4 1 7.500" stroke="#555" strokeWidth="2" /></svg></button>
          </div>
          <span className="w-[30px] bg-[#f0f0f0]" />
        </div>
        <span className="pointer-events-none absolute -bottom-[7px] left-0 h-[35px] w-[95px] border-3 border-[#fb3b3b]" />
      </section>

      <footer className="flex h-[30px] shrink-0 items-center pr-2 pl-1 text-[21px] leading-[25px] whitespace-nowrap">
        <output className="w-[375px] shrink-0 whitespace-pre">437.222222,  51.888889,  0.000000</output>
        <div className="flex gap-[3px]">
          {modes.map(([name, on]) => (
            <button
              key={name}
              type="button"
              aria-pressed={on}
              className={on ? "h-[27px] border border-[#0078d7] bg-[#dcebf8] px-1" : "h-[27px] border border-transparent px-1"}
            >
              {name}
            </button>
          ))}
          <a href="#feedback" className="pl-0.5 text-[#0000ff]">提交软件问题或增加新功能</a>
        </div>
        <a href="#mxcloud" className="ml-auto flex h-4 items-center bg-white px-0.5 text-[13px] font-semibold">
          <Logo className="mr-1 h-[15px] w-[18px]" />
          <span className="text-[#34446b]">CAD</span>.MxCloud
        </a>
      </footer>
    </div>
  );
}
